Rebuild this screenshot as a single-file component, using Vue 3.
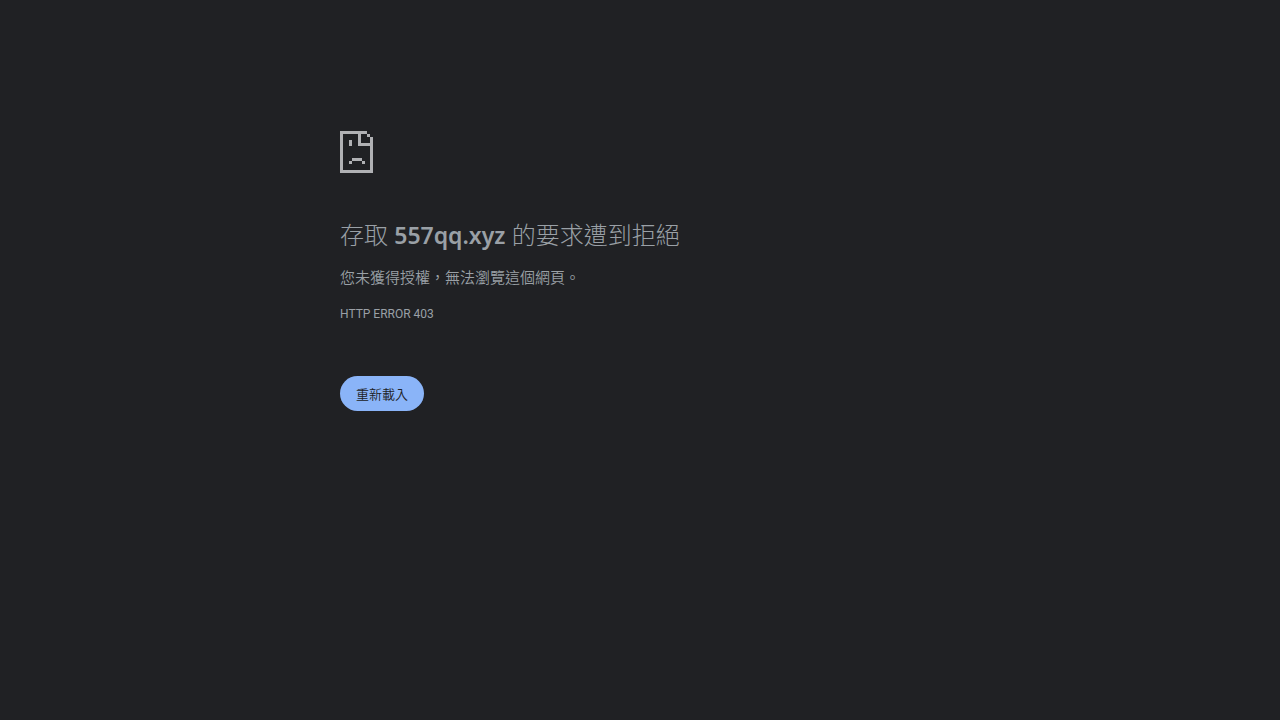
<script setup>
const host = '557qq.xyz'
const reload = () => window.location.reload()
</script>

<template>
  <main class="error-page">
    <svg class="icon" viewBox="0 0 33 42" shape-rendering="crispEdges" aria-hidden="true">
      <path
        fill-rule="evenodd"
        d="M0 0H27V3H30V6H33V42H0ZM3 3V39H30V15H18V3ZM21 3V12H30V6H27V3Z"
      />
      <path d="M9 9h3v6H9ZM12 27h10v3H12ZM9 30h3v3H9ZM22 30h3v3h-3Z" />
    </svg>
    <h1>存取 <strong>{{ host }}</strong> 的要求遭到拒絕</h1>
    <p class="summary">您未獲得授權，無法瀏覽這個網頁。</p>
    <p class="code">HTTP ERROR 403</p>
    <button type="button" @click="reload">重新載入</button>
  </main>
</template>

<style>
body {
  margin: 0;
  background: #202124;
}
</style>

<style scoped>
.error-page {
  box-sizing: border-box;
  max-width: 600px;
  margin: 0 auto;
  padding-top: 131px;
  color: #9aa0a6;
  font-family: "Open Sans", "Noto Sans CJK TC", sans-serif;
}

.icon {
  display: block;
  width: 33px;
  height: 42px;
  fill: #b0b1b4;
}

h1 {
  margin: 46px 0 14px;
  font-size: 24px;
  font-weight: 300;
  line-height: 32px;
}

strong {
  font-family: "Noto Sans", sans-serif;
  font-size: 23px;
  font-weight: 600;
}

.summary {
  margin: 0;
  font-size: 15px;
  font-weight: 350;
  line-height: 24px;
}

.code {
  margin: 15px 0 0;
  font-family: Roboto, sans-serif;
  font-size: 12px;
  line-height: 20px;
}

button {
  display: block;
  height: 35px;
  margin: 52px 0 0;
  padding: 0 16px;
  border: 0;
  border-radius: 20px;
  background: #8ab4f8;
  color: #202124;
  font-family: "Noto Sans CJK TC", sans-serif;
  font-size: 13px;
  font-weight: 350;
  cursor: pointer;
}
</style>
